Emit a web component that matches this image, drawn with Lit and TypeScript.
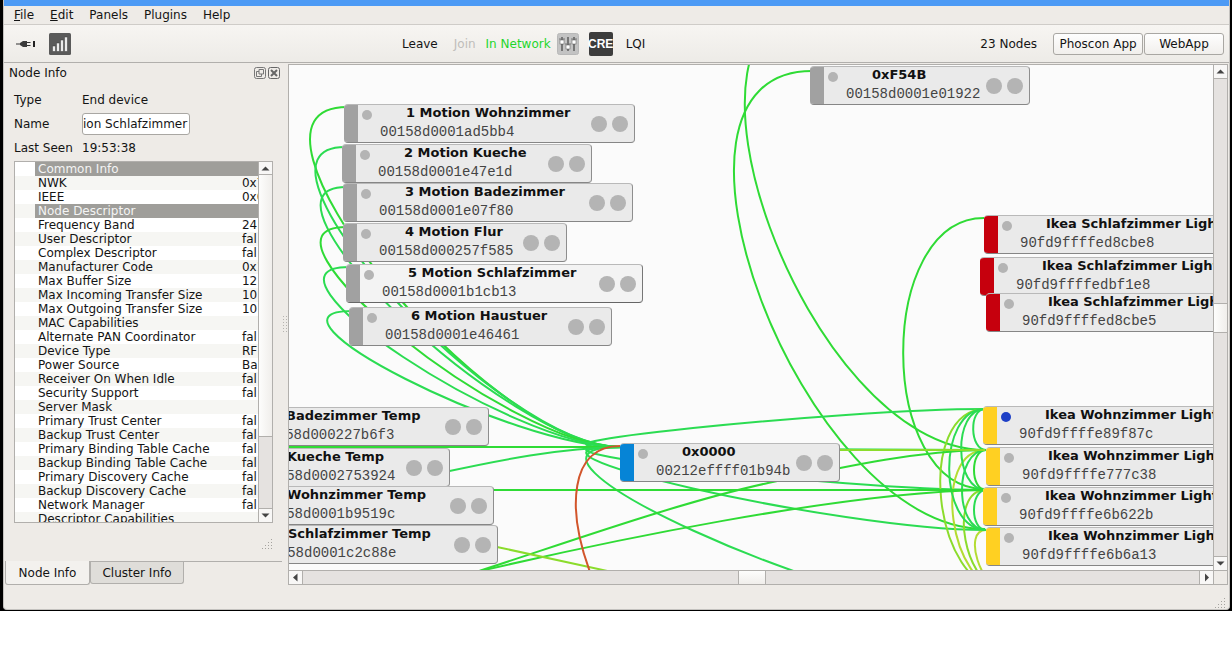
import { LitElement, html, css, svg } from "lit";
import { customElement, property, state } from "lit/decorators.js";

interface NodeData {
  name: string;
  mac: string;
  x: number;
  y: number;
  w: number;
  kind: string;
  lit?: boolean;
  selected?: boolean;
}

const NODES: NodeData[] = [
  { name: "1 Motion Wohnzimmer", mac: "00158d0001ad5bb4", x: 344, y: 104, w: 291, kind: "end" },
  { name: "2 Motion Kueche", mac: "00158d0001e47e1d", x: 342, y: 144, w: 250, kind: "end" },
  { name: "3 Motion Badezimmer", mac: "00158d0001e07f80", x: 343, y: 183, w: 290, kind: "end" },
  { name: "4 Motion Flur", mac: "00158d000257f585", x: 343, y: 223, w: 224, kind: "end" },
  { name: "5 Motion Schlafzimmer", mac: "00158d0001b1cb13", x: 346, y: 264, w: 297, kind: "end", selected: true },
  { name: "6 Motion Haustuer", mac: "00158d0001e46461", x: 349, y: 307, w: 263, kind: "end" },
  { name: "0xF54B", mac: "00158d0001e01922", x: 810, y: 66, w: 220, kind: "end" },
  { name: "Badezimmer Temp", mac: "00158d000227b6f3", x: 224, y: 407, w: 265, kind: "end" },
  { name: "Kueche Temp", mac: "00158d0002753924", x: 225, y: 448, w: 225, kind: "end" },
  { name: "Wohnzimmer Temp", mac: "00158d0001b9519c", x: 225, y: 486, w: 269, kind: "end" },
  { name: "Schlafzimmer Temp", mac: "00158d0001c2c88e", x: 226, y: 525, w: 272, kind: "end" },
  { name: "", mac: "", x: 226, y: 570, w: 236, kind: "end" },
  { name: "0x0000", mac: "00212effff01b94b", x: 620, y: 443, w: 220, kind: "coordinator" },
  { name: "Ikea Schlafzimmer Light", mac: "90fd9ffffed8cbe8", x: 984, y: 215, w: 300, kind: "offline" },
  { name: "Ikea Schlafzimmer Light", mac: "90fd9ffffedbf1e8", x: 980, y: 257, w: 300, kind: "offline" },
  { name: "Ikea Schlafzimmer Light", mac: "90fd9ffffed8cbe5", x: 986, y: 293, w: 300, kind: "offline" },
  { name: "Ikea Wohnzimmer Light", mac: "90fd9ffffe89f87c", x: 983, y: 406, w: 300, kind: "router", lit: true },
  { name: "Ikea Wohnzimmer Light", mac: "90fd9ffffe777c38", x: 986, y: 447, w: 300, kind: "router" },
  { name: "Ikea Wohnzimmer Light", mac: "90fd9ffffe6b622b", x: 983, y: 487, w: 300, kind: "router" },
  { name: "Ikea Wohnzimmer Light", mac: "90fd9ffffe6b6a13", x: 986, y: 527, w: 300, kind: "router" },
];

// Scene coordinates of the viewport's upper left corner.
const ORIGIN_X = 289;
const ORIGIN_Y = 65;

const GREEN = "#2fdb35";
const MINT = "#2bdc52";
const LIME = "#8bdc2c";
const OLIVE = "#b4dc32";

type Link = [number, number, number, number, string];

const LINKS: Link[] = [
  [347, 107, 620, 447, GREEN],
  [345, 147, 620, 447, MINT],
  [346, 187, 620, 447, MINT],
  [346, 227, 620, 447, GREEN],
  [349, 267, 620, 447, MINT],
  [352, 311, 620, 447, MINT],
  [812, 71, 985, 529, GREEN],
  [822, 4, 985, 450, GREEN],
  [984, 218, 985, 489, GREEN],
  [620, 447, 985, 409, MINT],
  [620, 447, 985, 450, MINT],
  [620, 447, 985, 490, MINT],
  [620, 447, 985, 530, MINT],
  [620, 447, 985, 614, MINT],
  [986, 409, 1005, 590, LIME],
  [986, 450, 1005, 590, OLIVE],
  [986, 490, 1005, 590, LIME],
  [986, 530, 1005, 590, OLIVE],
  [985, 409, 986, 450, MINT],
  [985, 409, 986, 490, MINT],
  [985, 409, 986, 530, MINT],
  [986, 450, 986, 490, GREEN],
  [986, 450, 986, 530, MINT],
  [986, 490, 986, 530, MINT],
];

const PATHS: [string, string][] = [
  ["M288 447H620", GREEN],
  ["M440 473C500 460 560 448 620 447", MINT],
  ["M493 490H985", GREEN],
  ["M476 572C560 545 680 502 768 483S920 451 985 450", GREEN],
  ["M476 572C600 543 840 492 985 490", GREEN],
  ["M497 547L612 572", LIME],
  ["M839 450H985", LIME],
  ["M620 446C569 446 567 510 590 572", "#d2552b"],
];

function curve([x1, y1, x2, y2]: Link): string {
  const d = 0.4 * Math.max(Math.abs(x2 - x1), Math.abs(y2 - y1));
  return `M${x1} ${y1}C${x1 - d} ${y1} ${x2 - d} ${y2} ${x2} ${y2}`;
}

const ROWS: [string, string, boolean?][] = [
  ["Common Info", "", true],
  ["NWK", "0x7"],
  ["IEEE", "0x0"],
  ["Node Descriptor", "", true],
  ["Frequency Band", "24"],
  ["User Descriptor", "fal"],
  ["Complex Descriptor", "fal"],
  ["Manufacturer Code", "0x1"],
  ["Max Buffer Size", "12"],
  ["Max Incoming Transfer Size", "10"],
  ["Max Outgoing Transfer Size", "10"],
  ["MAC Capabilities", ""],
  ["Alternate PAN Coordinator", "fal"],
  ["Device Type", "RF"],
  ["Power Source", "Ba"],
  ["Receiver On When Idle", "fal"],
  ["Security Support", "fal"],
  ["Server Mask", ""],
  ["Primary Trust Center", "fal"],
  ["Backup Trust Center", "fal"],
  ["Primary Binding Table Cache", "fal"],
  ["Backup Binding Table Cache", "fal"],
  ["Primary Discovery Cache", "fal"],
  ["Backup Discovery Cache", "fal"],
  ["Network Manager", "fal"],
  ["Descriptor Capabilities", ""],
];

@customElement("scroll-bar")
class ScrollBar extends LitElement {
  @property({ reflect: true }) orientation = "vertical";
  @property({ type: Number }) before = 0;
  @property({ type: Number }) after = 0;
  @property({ type: Number }) thumb = 1;

  static styles = css`
    :host {
      display: flex;
      flex-direction: column;
      box-sizing: border-box;
      width: 14px;
      background: #e5e2e0;
      border-left: 1px solid #b1afac;
    }
    :host([orientation="horizontal"]) {
      flex-direction: row;
      width: auto;
      height: 15px;
      border-left: none;
      border-top: 1px solid #b1afac;
      border-bottom: 1px solid #b1afac;
    }
    button {
      flex: none;
      display: flex;
      align-items: center;
      justify-content: center;
      width: 13px;
      height: 13px;
      padding: 0;
      border: none;
      background: #f8f7f6;
      box-shadow: 0 0 0 1px #b1afac;
    }
    .thumb {
      background: linear-gradient(90deg, #fdfdfc, #f0eeeb);
      box-shadow: 0 0 0 1px #b1afac;
    }
    :host([orientation="horizontal"]) .thumb {
      background: linear-gradient(#fdfdfc, #f0eeeb);
    }
  `;

  render() {
    const flat = this.orientation === "horizontal";
    return html`
      <button aria-label="Scroll back">
        <svg width="9" height="9" viewBox="0 0 9 9">
          <path d=${flat ? "M6.500 0.500V8.500L2 4.500Z" : "M0.500 6.500H8.500L4.500 2.500Z"} fill="#444"></path>
        </svg>
      </button>
      <div style="flex-grow:${this.before}"></div>
      <div class="thumb" style="flex-grow:${this.thumb}"></div>
      <div style="flex-grow:${this.after}"></div>
      <button aria-label="Scroll forward">
        <svg width="9" height="9" viewBox="0 0 9 9">
          <path d=${flat ? "M3 0.500V8.500L7 4.500Z" : "M0.500 2.500H8.500L4.500 6.500Z"} fill="#444"></path>
        </svg>
      </button>
    `;
  }
}

@customElement("graph-node")
class GraphNode extends LitElement {
  @property({ attribute: false }) node!: NodeData;

  static styles = css`
    .node {
      display: flex;
      box-sizing: border-box;
      height: 39px;
      background: #eaeaea;
      border: 1px solid #b9b9b9;
      border-left: none;
      border-right-color: #8e8e8e;
      border-bottom-color: #868686;
      border-radius: 4px;
      overflow: hidden;
    }
    .selected {
      background: #f3f3f3;
      border-right-color: #777;
      border-bottom-color: #666;
    }
    .strip {
      flex: none;
      width: 14px;
      background: #a1a1a1;
    }
    .coordinator .strip {
      background: #0684d6;
    }
    .offline .strip {
      background: #c6000d;
    }
    .router .strip {
      background: #ffd022;
    }
    .led {
      flex: none;
      width: 10px;
      height: 10px;
      margin: 5px 0 0 4px;
      border-radius: 50%;
      background: #b4b4b4;
    }
    .lit {
      background: #1d3fc6;
    }
    .text {
      flex: 1;
      min-width: 0;
      padding-left: 8px;
      white-space: nowrap;
    }
    .name {
      padding-left: 26px;
      font: bold 13px/15px "DejaVu Sans", sans-serif;
      color: #111;
    }
    .mac {
      font: 14px/16px "Liberation Mono", monospace;
      padding-top: 4px;
      color: #444;
    }
    .ports {
      flex: none;
      display: flex;
      align-items: center;
      gap: 5px;
      padding-right: 6px;
    }
    .port {
      width: 16px;
      height: 16px;
      border-radius: 50%;
      background: #b4b4b4;
    }
  `;

  render() {
    const n = this.node;
    return html`
      <div class="node ${n.kind} ${n.selected ? "selected" : ""}">
        <div class="strip"></div>
        <div class="led ${n.lit ? "lit" : ""}"></div>
        <div class="text">
          <div class="name">${n.name}</div>
          <div class="mac">${n.mac}</div>
        </div>
        <div class="ports">
          <div class="port"></div>
          <div class="port"></div>
        </div>
      </div>
    `;
  }
}

@customElement("app-root")
class AppRoot extends LitElement {
  @state() private tab = 0;

  static styles = css`
    :host {
      display: block;
      min-height: 100vh;
      background: #fff;
      font: 12px/14px "DejaVu Sans", sans-serif;
      color: #141414;
    }
    * {
      box-sizing: border-box;
    }
    button,
    input {
      font: inherit;
      color: inherit;
      margin: 0;
    }
    .screen {
      height: calc(100vh - 37px);
      background: #000;
      padding: 0 2px 1px 3px;
    }
    .window {
      display: flex;
      flex-direction: column;
      height: 100%;
      background: #eeebe7;
      border: 1px solid #c4c2bf;
      border-top: none;
      border-radius: 0 0 4px 4px;
      overflow: hidden;
    }
    .titlebar {
      flex: none;
      height: 6px;
      background: #4c9af5;
    }
    .menubar {
      flex: none;
      display: flex;
      gap: 16px;
      height: 18px;
      padding: 2px 10px;
    }
    .menubar button {
      padding: 0;
      border: none;
      background: none;
    }
    .toolbar {
      flex: none;
      display: flex;
      align-items: center;
      height: 39px;
      padding: 0 5px 0 11px;
      background: linear-gradient(#f7f5f2, #edebe7);
      border-top: 1px solid #cfccc8;
      border-bottom: 1px solid #b1afac;
    }
    .tool {
      display: flex;
      align-items: center;
      padding: 0;
      border: none;
      background: none;
    }
    .icons {
      display: flex;
      gap: 13px;
    }
    .spring {
      flex: 1;
    }
    .center {
      display: flex;
      align-items: center;
    }
    .join {
      padding: 0 10px 0 16px;
      color: #bfbdba;
    }
    .status {
      color: #1fd62c;
    }
    .mixer {
      padding: 0 10px 0 6px;
    }
    .cre {
      width: 24px;
      height: 24px;
      justify-content: center;
      background: #3d3d3d;
      border-radius: 2px;
      color: #fff;
      font: bold 12px/24px "Liberation Sans", sans-serif;
    }
    .lqi {
      padding-left: 13px;
    }
    .count {
      padding: 0 16px 0 4px;
    }
    .push {
      height: 22px;
      padding: 0 3px;
      background: linear-gradient(#fefefe, #f1efec);
      border: 1px solid #a9a7a3;
      border-radius: 3px;
      white-space: nowrap;
    }
    .push.app {
      width: 90px;
    }
    .push.web {
      width: 80px;
      margin-left: 1px;
    }
    .body {
      flex: 1;
      min-height: 0;
      display: flex;
      padding: 1px 1px 24px 0;
    }
    .dock {
      flex: none;
      display: flex;
      flex-direction: column;
      width: 278px;
    }
    .dockhead {
      display: flex;
      align-items: center;
      gap: 2px;
      height: 18px;
      padding: 0 2px 0 5px;
    }
    .dockhead h2 {
      flex: 1;
      margin: 0;
      font: inherit;
    }
    .form {
      display: grid;
      grid-template-columns: 68px 108px;
      align-items: center;
      grid-template-rows: 24px 24px 24px;
      padding: 6px 10px 1px;
    }
    .form input {
      width: 108px;
      height: 22px;
      padding: 0;
      background: #fff;
      border: 1px solid #a9a7a3;
      border-radius: 3px;
      outline: none;
    }
    .tree {
      flex: 1;
      min-height: 0;
      display: flex;
      margin: 0 9px 0 10px;
      border: 1px solid #b1afac;
      background: #fff;
    }
    .rows {
      flex: 1;
      overflow: hidden;
    }
    table {
      width: 100%;
      table-layout: fixed;
      border-collapse: collapse;
    }
    col.indent {
      width: 20px;
    }
    col.value {
      width: 19px;
    }
    tr:nth-child(even) {
      background: #f6f6f3;
    }
    td {
      height: 14px;
      padding: 0 0 0 3px;
      overflow: hidden;
      white-space: nowrap;
    }
    .group {
      background: #9f9e9a;
      color: #f4f4f4;
    }
    .grip {
      flex: none;
      display: flex;
      justify-content: flex-end;
      height: 38px;
      padding: 16px 9px 0 0;
    }
    .tabs {
      flex: none;
      display: flex;
      align-items: flex-start;
      height: 24px;
      margin: 0 0 0 1px;
      border-top: 1px solid #b1afac;
    }
    .tabs button {
      width: 94px;
      height: 22px;
      padding: 0;
      background: #dfddd9;
      border: 1px solid #b1afac;
      border-top: none;
      border-radius: 0 0 3px 3px;
    }
    .tabs .current {
      width: 85px;
      height: 24px;
      margin-top: -1px;
      background: #f3f1ee;
    }
    .handle {
      flex: none;
      width: 6px;
      display: flex;
      align-items: center;
      justify-content: center;
    }
    .view {
      flex: 1;
      min-width: 0;
      display: grid;
      grid-template-columns: 1fr 14px;
      grid-template-rows: 1fr 15px;
      border: 1px solid #b1afac;
      border-bottom: none;
    }
    .corner {
      border: 1px solid #b1afac;
      border-right: none;
    }
    .canvas {
      position: relative;
      overflow: hidden;
      background: #fbfbfb;
    }
    .edges {
      position: absolute;
      inset: 0;
      width: 100%;
      height: 100%;
    }
    graph-node {
      position: absolute;
    }
    .statusbar {
      flex: none;
      display: flex;
      justify-content: flex-end;
      align-items: flex-end;
      height: 0;
      padding-right: 3px;
    }
  `;

  private gripDots() {
    const dots: [number, number][] = [];
    for (let r = 0; r < 4; r++) for (let c = 3 - r; c < 4; c++) dots.push([c * 3, r * 3]);
    return html`<svg width="11" height="11" viewBox="0 0 11 11">
      ${dots.map(([x, y]) => svg`<rect x=${x} y=${y} width="1" height="1" fill="#a5a39f"></rect>`)}
    </svg>`;
  }

  private toolbar() {
    return html`
      <div class="toolbar">
        <div class="icons">
          <button class="tool" aria-label="Connect">
            <svg width="21" height="12" viewBox="0 0 21 12">
              <path d="M1 6H6M12 4.500H15.500M12 7.500H15.500" stroke="#333" stroke-width="1.200" fill="none"></path>
              <path d="M5 5L8 3H12V9H8L5 7Z" fill="#3a3a3a"></path>
              <path d="M19 3V9" stroke="#222" stroke-width="2"></path>
            </svg>
          </button>
          <button class="tool" aria-label="Signal">
            <svg width="22" height="22" viewBox="0 0 22 22">
              <rect width="22" height="22" rx="1.500" fill="#5a5a5a"></rect>
              <path d="M3.500 18.500V13H6.500V18.500ZM7.500 18.500V10H10.500V18.500ZM11.500 18.500V7H14.500V18.500ZM15.500 18.500V4H18.500V18.500Z" fill="#ececec" stroke="#3a3a3a" stroke-width="0.500"></path>
            </svg>
          </button>
        </div>
        <div class="spring"></div>
        <div class="center">
          <button class="tool">Leave</button>
          <button class="tool join" disabled>Join</button>
          <span class="status">In Network</span>
          <button class="tool mixer" aria-label="Settings">
            <svg width="22" height="22" viewBox="0 0 22 22">
              <rect x="0.500" y="0.500" width="21" height="21" rx="2" fill="#c3c3c3" stroke="#b8b8b8"></rect>
              <path d="M5 4V18M11 4V18M17 4V18" stroke="#444" stroke-width="1.200"></path>
              <path d="M2 6H8M8 11H14M14 6H20" stroke="#777" stroke-width="1"></path>
              <rect x="3" y="7" width="4" height="4" fill="#fff" stroke="#555" stroke-width="0.500"></rect>
              <rect x="9" y="12" width="4" height="4" fill="#fff" stroke="#555" stroke-width="0.500"></rect>
              <rect x="15" y="7" width="4" height="4" fill="#fff" stroke="#555" stroke-width="0.500"></rect>
            </svg>
          </button>
          <button class="tool cre">CRE</button>
          <button class="tool lqi">LQI</button>
        </div>
        <div class="spring"></div>
        <span class="count">23 Nodes</span>
        <button class="push app">Phoscon App</button>
        <button class="push web">WebApp</button>
      </div>
    `;
  }

  private dock() {
    return html`
      <section class="dock">
        <div class="dockhead">
          <h2>Node Info</h2>
          <button class="tool" aria-label="Float">
            <svg width="12" height="12" viewBox="0 0 12 12" fill="none" stroke="#777">
              <rect x="0.500" y="0.500" width="11" height="11" rx="2"></rect>
              <path d="M5 2.500H9.500V7H5ZM5 4.500H2.500V9.500H7.500V7"></path>
            </svg>
          </button>
          <button class="tool" aria-label="Close">
            <svg width="12" height="12" viewBox="0 0 12 12" fill="none" stroke="#666">
              <rect x="0.500" y="0.500" width="11" height="11" rx="2"></rect>
              <path d="M3 3L9 9M9 3L3 9" stroke-width="2"></path>
            </svg>
          </button>
        </div>
        <div class="form">
          <span>Type</span><span>End device</span>
          <label for="name">Name</label><input id="name" .value=${"ion Schlafzimmer"} />
          <span>Last Seen</span><span>19:53:38</span>
        </div>
        <div class="tree">
          <div class="rows">
            <table>
              <colgroup>
                <col class="indent" />
                <col />
                <col class="value" />
              </colgroup>
              <tbody>
                ${ROWS.map(([key, value, group]) =>
                  group
                    ? html`<tr><td></td><td class="group" colspan="2">${key}</td></tr>`
                    : html`<tr><td></td><td>${key}</td><td>${value}</td></tr>`
                )}
              </tbody>
            </table>
          </div>
          <scroll-bar .before=${0} .thumb=${259} .after=${73}></scroll-bar>
        </div>
        <div class="grip">${this.gripDots()}</div>
        <div class="tabs">
          ${["Node Info", "Cluster Info"].map(
            (label, i) => html`<button class=${this.tab === i ? "current" : ""} @click=${() => (this.tab = i)}>${label}</button>`
          )}
        </div>
      </section>
    `;
  }

  render() {
    return html`
      <div class="screen">
        <div class="window">
          <div class="titlebar"></div>
          <nav class="menubar">
            <button><u>F</u>ile</button>
            <button><u>E</u>dit</button>
            <button>Panels</button>
            <button>Plugins</button>
            <button>Help</button>
          </nav>
          ${this.toolbar()}
          <div class="body">
            ${this.dock()}
            <div class="handle">
              <svg width="4" height="18" viewBox="0 0 4 18">
                <path d="M0.500 0V18M3.500 0V18" stroke="#b5b3af" stroke-dasharray="1 2"></path>
              </svg>
            </div>
            <main class="view">
              <div class="canvas">
                <svg class="edges" fill="none" stroke-width="2">
                  <g transform="translate(${-ORIGIN_X} ${-ORIGIN_Y})">
                    ${LINKS.map((l) => svg`<path d=${curve(l)} stroke=${l[4]}></path>`)}
                    ${PATHS.map(([d, color]) => svg`<path d=${d} stroke=${color}></path>`)}
                  </g>
                </svg>
                ${NODES.map(
                  (n) => html`<graph-node
                    .node=${n}
                    style="left:${n.x - ORIGIN_X}px;top:${n.y - ORIGIN_Y}px;width:${n.w}px"
                  ></graph-node>`
                )}
              </div>
              <scroll-bar .before=${226} .thumb=${27} .after=${225}></scroll-bar>
              <scroll-bar orientation="horizontal" .before=${436} .thumb=${26} .after=${434}></scroll-bar>
              <div class="corner"></div>
            </main>
          </div>
          <div class="statusbar">${this.gripDots()}</div>
        </div>
      </div>
    `;
  }
}
